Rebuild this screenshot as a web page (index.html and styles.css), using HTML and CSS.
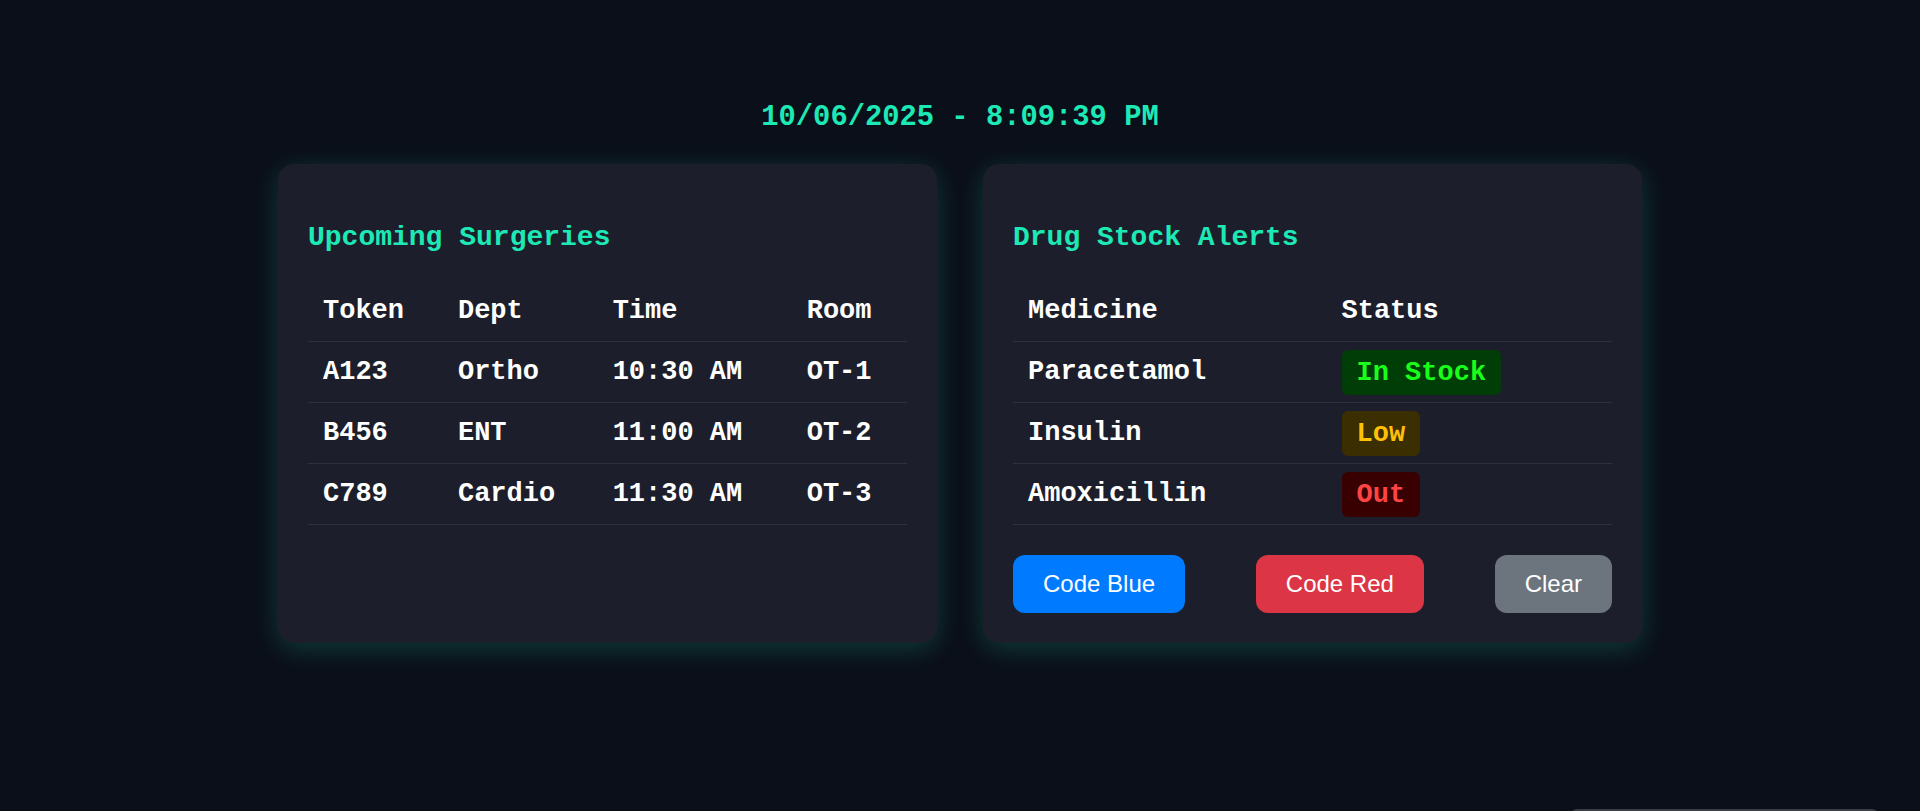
FILE: index.html
```html
<!DOCTYPE html>
<html lang="en">
<head>
<meta charset="utf-8">
<title>Hospital Dashboard</title>
<link rel="stylesheet" href="styles.css">
</head>
<body>
  <div class="clock">10/06/2025 - 8:09:39 PM</div>
  <main class="panels">
    <section class="card">
      <h2 class="card-title">Upcoming Surgeries</h2>
      <table class="grid">
        <thead>
          <tr><th>Token</th><th>Dept</th><th>Time</th><th>Room</th></tr>
        </thead>
        <tbody>
          <tr><td>A123</td><td>Ortho</td><td>10:30 AM</td><td>OT-1</td></tr>
          <tr><td>B456</td><td>ENT</td><td>11:00 AM</td><td>OT-2</td></tr>
          <tr><td>C789</td><td>Cardio</td><td>11:30 AM</td><td>OT-3</td></tr>
        </tbody>
      </table>
    </section>
    <section class="card">
      <h2 class="card-title">Drug Stock Alerts</h2>
      <table class="grid">
        <thead>
          <tr><th>Medicine</th><th>Status</th></tr>
        </thead>
        <tbody>
          <tr><td>Paracetamol</td><td><span class="badge ok">In Stock</span></td></tr>
          <tr><td>Insulin</td><td><span class="badge low">Low</span></td></tr>
          <tr><td>Amoxicillin</td><td><span class="badge out">Out</span></td></tr>
        </tbody>
      </table>
      <div class="actions">
        <button class="btn blue">Code Blue</button>
        <button class="btn red">Code Red</button>
        <button class="btn grey">Clear</button>
      </div>
    </section>
  </main>
  <div class="toast"></div>
</body>
</html>
```

FILE: styles.css
```css
html, body {
  margin: 0;
  padding: 0;
}
body {
  background: #0b0f19;
  color: #ffffff;
  font-family: "Liberation Mono", "Courier New", monospace;
  font-weight: bold;
  height: 811px;
  overflow: hidden;
  padding-top: 101px;
  box-sizing: border-box;
}
.clock {
  text-align: center;
  font-size: 28.8px;
  color: #1de9b6;
  margin-bottom: 30px;
}
.panels {
  display: flex;
  justify-content: center;
  align-items: stretch;
  gap: 46px;
}
.card {
  width: 659px;
  box-sizing: border-box;
  padding: 30px 30px 30px;
  background: #1c1f2b;
  border-radius: 16px;
  box-shadow: 0 6px 26px rgba(29, 233, 182, 0.2);
}
.card-title {
  margin: 28px 0 28px;
  font-size: 28px;
  font-weight: bold;
  color: #1de9b6;
}
.grid {
  width: 100%;
  border-collapse: collapse;
  font-size: 27px;
}
.grid th, .grid td {
  text-align: left;
  padding: 15px;
  border-bottom: 1px solid #2d313d;
  font-weight: bold;
  white-space: nowrap;
}
.badge {
  display: inline;
  padding: 7.5px 15px;
  border-radius: 6px;
  font-weight: bold;
}
.badge.ok { background: #013d06; color: #1aff1a; }
.badge.low { background: #3b2e00; color: #ffc107; }
.badge.out { background: #380000; color: #ff4444; }
.actions {
  display: flex;
  justify-content: space-between;
  margin-top: 30px;
}
.btn {
  font-family: "Liberation Sans", Arial, sans-serif;
  font-size: 24px;
  font-weight: normal;
  color: #ffffff;
  border: none;
  border-radius: 12px;
  padding: 15px 30px;
  line-height: normal;
}
.btn.blue { background: #007bff; }
.btn.red { background: #dc3545; }
.btn.grey { background: #6c757d; }
.toast {
  position: fixed;
  right: 42px;
  top: 809px;
  width: 307px;
  height: 40px;
  background: #3a3d43;
  border-radius: 6px;
}
```
